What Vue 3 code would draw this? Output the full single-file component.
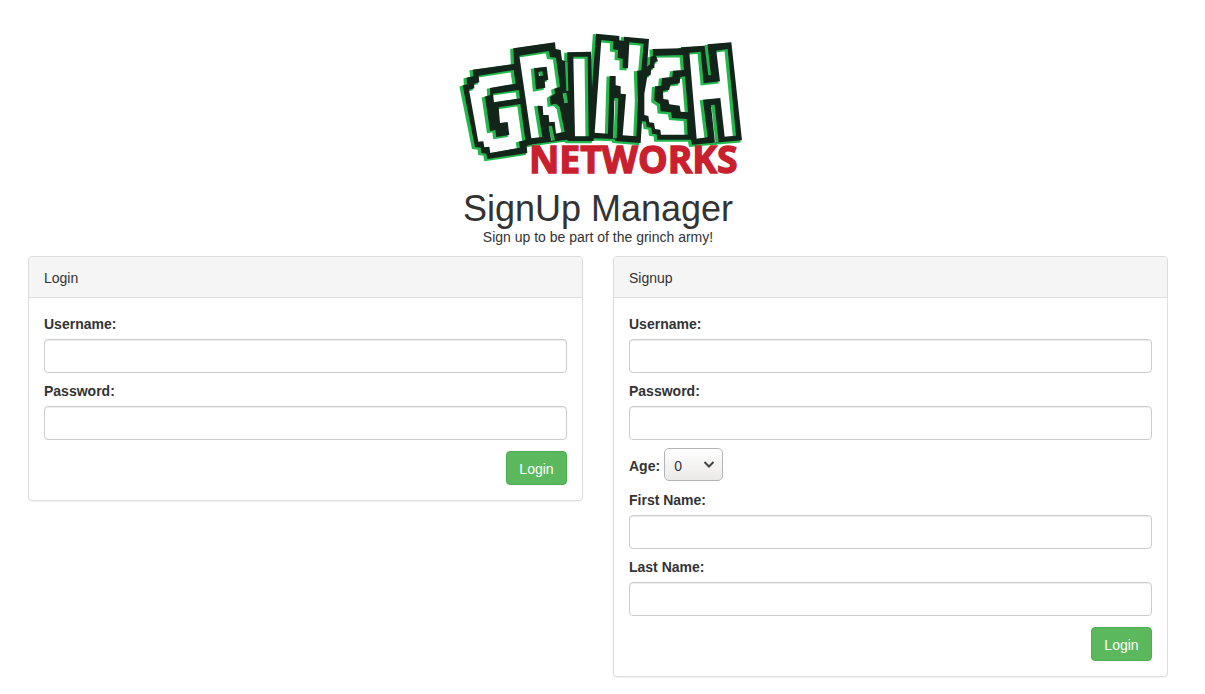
<script setup>
import { ref } from 'vue'

const login = ref({ username: '', password: '' })
const signup = ref({ username: '', password: '', age: 0, firstName: '', lastName: '' })
const ages = Array.from({ length: 100 }, (_, i) => i)
</script>

<template>
  <main class="container">
    <header class="masthead">
      <svg class="logo" viewBox="0 0 900 480" role="img" aria-label="Grinch Networks">
        <defs>
          <path
            id="letters"
            fill-rule="evenodd"
            d="M68 134 L192 117 L190 70 L315 52 L317 72 L332 75 L336 105 L352 110 L352 82 L423 80 L426 190 L438 26 L508 33 L508 46 L521 48 L522 35 L597 42 L591 125 L600 118 L601 96 L609 93 L608 72 L693 70 L693 67 L762 62 L765 64 L773 63 L773 58 L844 52 L876 346 L808 352 L726 359 L723 344 L622 344 L620 328 L606 326 L604 308 L590 306 L588 290 L576 288 L572 354 L496 348 L494 342 L432 340 L430 348 L356 348 L350 344 L305 350 L248 358 L230 362 L232 384 L112 402 L109 386 L94 384 L92 368 L75 366 L38 182 L51 178 L50 158 L70 154 Z
               M86 152 L191 135 L197 176 L120 189 L121 210 L105 215 L120 318 L136 315 L139 336 L178 330 L173 291 L150 294 L146 247 L211 237 L226 345 L207 350 L210 368 L121 384 L118 365 L103 367 L100 349 L85 350 L57 194 L73 190 L72 176 L88 172 Z
               M129 206 L206 195 L210 220 L132 232 Z
               M208 92 L296 78 L300 96 L318 98 L330 185 L313 192 L315 206 L300 216 L302 239 L318 236 L329 247 L344 320 L318 326 L314 290 L298 292 L296 270 L280 270 L278 243 L262 242 L277 336 L244 340 Z
               M252 130 L290 125 L295 164 L284 167 L286 188 L258 193 Z
               M265 141 L277 139 L279 152 L267 153 Z
               M338 205 L349 203 L354 233 L344 235 Z
               M345 110 L353 110 L355 198 L349 198 Z
               M296 303 L306 303 L315 346 L304 347 Z
               M370 95 L413 95 L416 334 L375 334 Z
               M454 45 L490 49 L489 73 L504 75 L503 99 L518 101 L518 129 L534 130 L538 52 L581 56 L574 136 L561 137 L564 225 L559 334 L518 331 L528 208 L512 206 L512 184 L497 181 L497 153 L479 153 L474 326 L434 323 Z
               M493 219 L505 220 L500 340 L490 340 Z
               M618 92 L698 90 L702 135 L669 137 L667 156 L636 159 L634 182 L615 184 L613 226 L630 238 L632 259 L663 262 L666 279 L710 282 L713 329 L633 329 L631 314 L615 312 L612 294 L598 292 L595 273 L583 270 L583 207 L592 154 L602 150 L604 131 L613 129 L614 111 L624 109 Z
               M705 154 L691 156 L689 175 L661 179 L658 194 L639 198 L640 222 L655 224 L658 238 L689 242 L692 260 L714 262 Z
               M718 83 L752 80 L761 175 L810 169 L799 77 L833 72 L858 332 L824 335 L811 219 L759 224 L773 337 L740 341 Z
               M764 64 L773 63 L783 151 L775 151 Z
               M783 240 L794 239 L806 353 L795 354 Z"
          />
        </defs>
        <use href="#letters" class="glow" x="-7" y="4" />
        <use href="#letters" class="ink" />
        <text class="word" x="237" y="445">NETWORKS</text>
      </svg>
      <h1>SignUp Manager</h1>
      <p>Sign up to be part of the grinch army!</p>
    </header>

    <div class="row">
      <section class="panel">
        <h2>Login</h2>
        <form @submit.prevent>
          <div class="field">
            <label for="login-username">Username:</label>
            <input id="login-username" v-model="login.username" type="text" />
          </div>
          <div class="field">
            <label for="login-password">Password:</label>
            <input id="login-password" v-model="login.password" type="password" />
          </div>
          <button type="submit">Login</button>
        </form>
      </section>

      <section class="panel">
        <h2>Signup</h2>
        <form @submit.prevent>
          <div class="field">
            <label for="signup-username">Username:</label>
            <input id="signup-username" v-model="signup.username" type="text" />
          </div>
          <div class="field">
            <label for="signup-password">Password:</label>
            <input id="signup-password" v-model="signup.password" type="password" />
          </div>
          <div class="age">
            <label for="signup-age">Age:</label>
            <span class="select">
              <select id="signup-age" v-model="signup.age">
                <option v-for="n in ages" :key="n" :value="n">{{ n }}</option>
              </select>
              <svg viewBox="0 0 12 8" aria-hidden="true"><path d="M1.5 1 L6 5.5 L10.5 1" /></svg>
            </span>
          </div>
          <div class="field">
            <label for="signup-first">First Name:</label>
            <input id="signup-first" v-model="signup.firstName" type="text" />
          </div>
          <div class="field">
            <label for="signup-last">Last Name:</label>
            <input id="signup-last" v-model="signup.lastName" type="text" />
          </div>
          <button type="submit">Login</button>
        </form>
      </section>
    </div>
  </main>
</template>

<style>
body {
  background: #fff;
  padding-right: 9px;
}
</style>

<style scoped>
.container,
.container * {
  box-sizing: border-box;
}
.container {
  max-width: 1170px;
  margin: 0 auto;
  padding: 25px 15px 16px;
  font: 14px/20px "Liberation Sans", Arial, sans-serif;
  color: #333;
}
.masthead {
  display: flex;
  flex-direction: column;
  align-items: center;
  text-align: center;
}
.logo {
  display: block;
  width: 300px;
  margin-left: 4px;
}
.glow {
  fill: #23b84e;
  stroke: #23b84e;
  stroke-width: 5;
}
.ink {
  fill: #13241a;
}
.word {
  font: 700 112px "Open Sans", "Noto Sans", sans-serif;
  fill: #c91f2e;
  stroke: #c91f2e;
  stroke-width: 4;
}
h1 {
  margin: 4px 0 0;
  font-size: 36px;
  font-weight: 400;
  line-height: 40px;
}
p {
  margin: -2px 0 9px;
}
.row {
  display: grid;
  grid-template-columns: 1fr 1fr;
  gap: 30px;
  align-items: start;
}
.panel {
  border: 1px solid #ddd;
  border-radius: 4px;
  background: #fff;
  box-shadow: 0 1px 1px rgba(0, 0, 0, 0.05);
}
h2 {
  margin: 0;
  padding: 11px 15px 9px;
  border-bottom: 1px solid #ddd;
  border-radius: 3px 3px 0 0;
  background: #f5f5f5;
  font-size: 14px;
  font-weight: 400;
}
form {
  display: flex;
  flex-direction: column;
  gap: 8px;
  padding: 16px 15px 15px;
}
.field {
  display: flex;
  flex-direction: column;
  gap: 5px;
}
label {
  font-weight: 700;
}
input {
  width: 100%;
  height: 34px;
  padding: 6px 12px;
  border: 1px solid #ccc;
  border-radius: 4px;
  background: #fff;
  font: inherit;
  color: #555;
  box-shadow: inset 0 1px 1px rgba(0, 0, 0, 0.075);
}
.age {
  display: flex;
  align-items: baseline;
  gap: 4px;
  height: 34px;
}
.select {
  display: grid;
  align-items: center;
}
.select > * {
  grid-area: 1 / 1;
}
select {
  appearance: none;
  width: 59px;
  height: 33px;
  padding: 3px 9px 0;
  border: 1px solid #b4b4b4;
  border-radius: 5px;
  background: linear-gradient(#fff, #ebe9e8);
  font: inherit;
  color: #333;
}
.select svg {
  justify-self: end;
  width: 12px;
  height: 8px;
  margin-right: 8px;
  pointer-events: none;
}
.select path {
  fill: none;
  stroke: #444;
  stroke-width: 2;
}
button {
  align-self: flex-end;
  min-width: 61px;
  margin-top: 3px;
  padding: 7px 12px 5px;
  border: 1px solid #4cae4c;
  border-radius: 4px;
  background: #5cb85c;
  font: inherit;
  color: #fff;
  cursor: pointer;
}
</style>
